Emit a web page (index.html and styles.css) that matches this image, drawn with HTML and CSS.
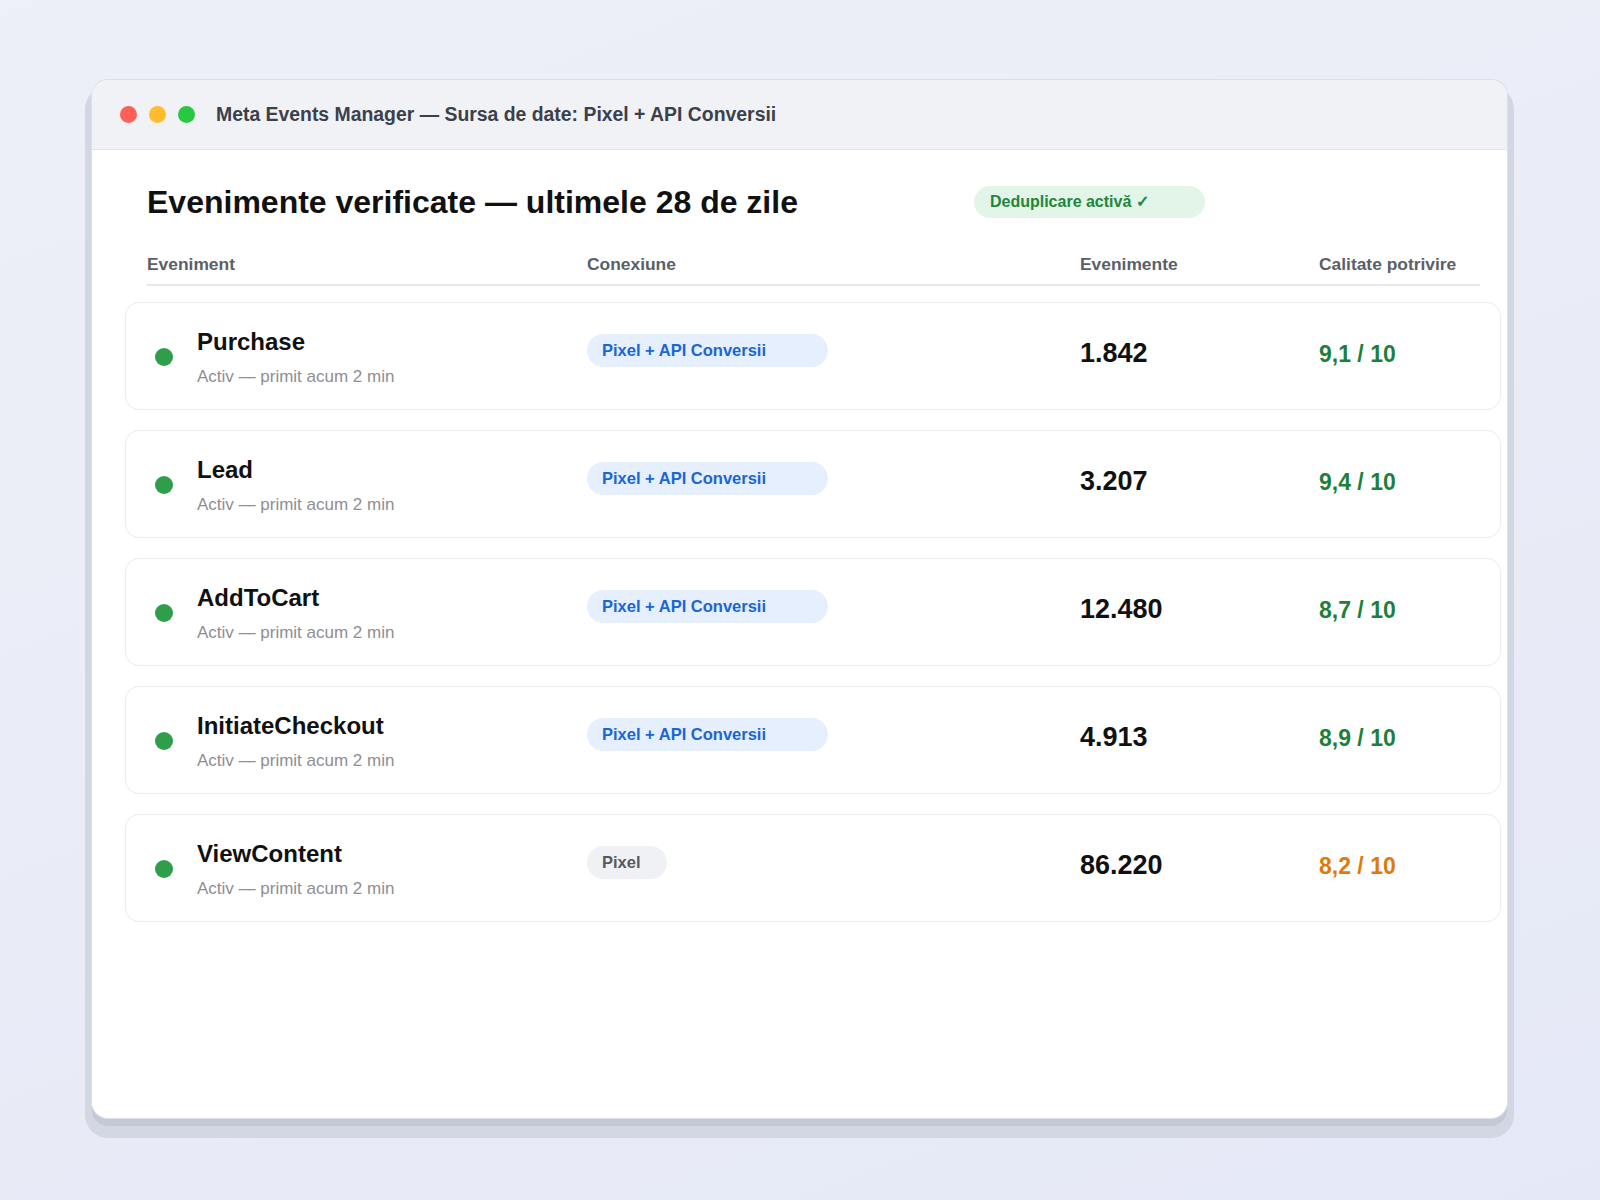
FILE: index.html
```html
<!DOCTYPE html>
<html lang="ro">
<head>
  <meta charset="UTF-8" />
  <meta name="viewport" content="width=device-width, initial-scale=1.0" />
  <title>Meta Events Manager</title>
  <link rel="stylesheet" href="styles.css">
</head>
<body>
  <div class="window">
    <div class="titlebar">
      <div class="lights">
        <span class="light red"></span>
        <span class="light yellow"></span>
        <span class="light green"></span>
      </div>
      <div class="window-title">Meta Events Manager — Sursa de date: Pixel + API Conversii</div>
    </div>

    <div class="content">
      <div class="heading">
        <h1>Evenimente verificate — ultimele 28 de zile</h1>
        <span class="badge">Deduplicare activă ✓</span>
      </div>

      <div class="table-head">
        <div>Eveniment</div>
        <div>Conexiune</div>
        <div>Evenimente</div>
        <div>Calitate potrivire</div>
      </div>

      <div class="rows">
        <div class="row">
          <div class="event">
            <span class="status"></span>
            <div>
              <div class="name">Purchase</div>
              <div class="sub">Activ — primit acum 2 min</div>
            </div>
          </div>
          <div class="conn"><span class="pill blue">Pixel + API Conversii</span></div>
          <div class="count">1.842</div>
          <div class="score good">9,1 / 10</div>
        </div>

        <div class="row">
          <div class="event">
            <span class="status"></span>
            <div>
              <div class="name">Lead</div>
              <div class="sub">Activ — primit acum 2 min</div>
            </div>
          </div>
          <div class="conn"><span class="pill blue">Pixel + API Conversii</span></div>
          <div class="count">3.207</div>
          <div class="score good">9,4 / 10</div>
        </div>

        <div class="row">
          <div class="event">
            <span class="status"></span>
            <div>
              <div class="name">AddToCart</div>
              <div class="sub">Activ — primit acum 2 min</div>
            </div>
          </div>
          <div class="conn"><span class="pill blue">Pixel + API Conversii</span></div>
          <div class="count">12.480</div>
          <div class="score good">8,7 / 10</div>
        </div>

        <div class="row">
          <div class="event">
            <span class="status"></span>
            <div>
              <div class="name">InitiateCheckout</div>
              <div class="sub">Activ — primit acum 2 min</div>
            </div>
          </div>
          <div class="conn"><span class="pill blue">Pixel + API Conversii</span></div>
          <div class="count">4.913</div>
          <div class="score good">8,9 / 10</div>
        </div>

        <div class="row">
          <div class="event">
            <span class="status"></span>
            <div>
              <div class="name">ViewContent</div>
              <div class="sub">Activ — primit acum 2 min</div>
            </div>
          </div>
          <div class="conn"><span class="pill gray">Pixel</span></div>
          <div class="count">86.220</div>
          <div class="score warn">8,2 / 10</div>
        </div>
      </div>
    </div>
  </div>
</body>
</html>
```

FILE: styles.css
```css
body {
  margin: 0;
  padding: 80px 93px 0 92px;
  min-height: 1200px;
  box-sizing: border-box;
  font-family: 'Liberation Sans', Arial, sans-serif;
  background: linear-gradient(160deg, #eef0f8, #e5e8f6);
  color: #111;
}
.window {
  height: 1038px;
  background: white;
  border-radius: 16px;
  overflow: hidden;
  box-shadow: 0 0 0 1px #dcdfe8, 0 8px 0 0 #c4c9d6, 0 13px 0 7px #d3d7e3;
}
.titlebar {
  display: flex;
  align-items: center;
  height: 69px;
  padding-left: 28px;
  background-color: #f1f2f5;
  border-bottom: 1px solid #e2e4ea;
}
.lights {
  display: flex;
  gap: 12px;
}
.light {
  width: 17px;
  height: 17px;
  border-radius: 50%;
}
.red { background-color: #ff5f57; }
.yellow { background-color: #febc2e; }
.green { background-color: #28c840; }
.window-title {
  margin-left: 21px;
  font-size: 19.4px;
  font-weight: bold;
  color: #3b404b;
}
.content {
  padding: 32px 27px 0 55px;
}
.heading {
  display: flex;
  align-items: center;
}
h1 {
  margin: 0;
  font-size: 32px;
  line-height: 40px;
  color: #111;
}
.badge {
  box-sizing: border-box;
  min-width: 231px;
  margin-left: 176px;
  padding: 0 16px;
  height: 32px;
  line-height: 32px;
  border-radius: 16px;
  background-color: #e3f4e8;
  color: #1e873c;
  font-size: 16px;
  font-weight: bold;
}
.table-head {
  display: grid;
  grid-template-columns: 440px 493px 239px 1fr;
  margin-top: 31px;
  padding-bottom: 9px;
  border-bottom: 2px solid #e6e8ed;
  font-size: 17.4px;
  line-height: 22px;
  font-weight: bold;
  color: #5a5f68;
}
.rows {
  display: flex;
  flex-direction: column;
  gap: 20px;
  margin: 16px -21px 0 -22px;
}
.row {
  display: grid;
  grid-template-columns: 432px 493px 239px 1fr;
  align-items: center;
  padding: 24px 0 22px 29px;
  border: 1px solid #ececf0;
  border-radius: 14px;
  background-color: white;
}
.event {
  display: flex;
  align-items: center;
  gap: 24px;
}
.status {
  width: 18px;
  height: 18px;
  border-radius: 50%;
  background-color: #2e9e4b;
  flex-shrink: 0;
}
.name {
  font-size: 24px;
  line-height: 30px;
  font-weight: bold;
  color: #111;
}
.sub {
  margin-top: 10px;
  font-size: 17px;
  line-height: 20px;
  color: #8e8e93;
}
.conn {
  align-self: start;
  margin-top: 7px;
}
.pill {
  display: inline-block;
  box-sizing: border-box;
  height: 33px;
  line-height: 33px;
  padding: 0 26px 0 15px;
  border-radius: 17px;
  font-size: 16.5px;
  font-weight: bold;
}
.pill.blue {
  min-width: 241px;
  background-color: #e5effd;
  color: #1a66d6;
}
.pill.gray {
  background-color: #f0f1f4;
  color: #555a62;
}
.count {
  align-self: start;
  margin-top: 10px;
  font-size: 27px;
  line-height: 32px;
  font-weight: bold;
  color: #111;
}
.score {
  align-self: start;
  margin-top: 13px;
  font-size: 23px;
  line-height: 28px;
  font-weight: bold;
}
.score.good { color: #1f7f3a; }
.score.warn { color: #de7a0a; }
```
